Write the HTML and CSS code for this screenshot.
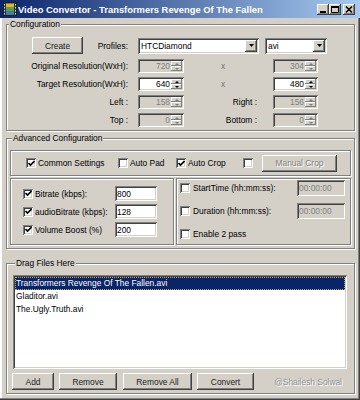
FILE: index.html
```html
<!DOCTYPE html>
<html>
<head>
<meta charset="utf-8">
<title>Video Convertor</title>
<link rel="stylesheet" href="styles.css">
</head>
<body>
<div class="window">
  <div class="titlebar">
    <svg class="appicon" width="14" height="14" viewBox="0 0 14 14">
      <rect x="0.5" y="0.5" width="13" height="13" fill="#2a3a2a" stroke="#202020"/>
      <rect x="3" y="1.5" width="8" height="11" fill="#e8b030"/>
      <rect x="3" y="5" width="8" height="4" fill="#5aa040"/>
      <rect x="3" y="9" width="8" height="3.5" fill="#3a78c8"/>
      <g fill="#d8d8d8">
        <rect x="1" y="2" width="1" height="1.5"/><rect x="1" y="5" width="1" height="1.5"/><rect x="1" y="8" width="1" height="1.5"/><rect x="1" y="11" width="1" height="1.5"/>
        <rect x="12" y="2" width="1" height="1.5"/><rect x="12" y="5" width="1" height="1.5"/><rect x="12" y="8" width="1" height="1.5"/><rect x="12" y="11" width="1" height="1.5"/>
      </g>
    </svg>
    <span class="title">Video Convertor - Transformers Revenge Of The Fallen</span>
    <div class="ctrls">
      <span class="cbtn"><svg width="12" height="11" viewBox="0 0 12 11"><rect x="3" y="7" width="6" height="2" fill="#000"/></svg></span>
      <span class="cbtn"><svg width="12" height="11" viewBox="0 0 12 11"><path d="M2.5 2.5h7v6h-7z" fill="none" stroke="#000"/><rect x="2" y="2" width="8" height="2" fill="#000"/></svg></span>
      <span class="cbtn close"><svg width="12" height="11" viewBox="0 0 12 11"><path d="M3 2.5l6 6M9 2.5l-6 6" stroke="#000" stroke-width="1.5"/></svg></span>
    </div>
  </div>

  <div class="content">
    <fieldset class="group config">
      <legend>Configuration</legend>
      <div class="row1">
        <span class="btn create">Create</span>
        <span class="lbl profiles">Profiles:</span>
        <span class="select profile"><span class="val">HTCDiamond</span><span class="drop"><svg width="5" height="3" viewBox="0 0 5 3"><path d="M0 0h5L2.5 3z"/></svg></span></span>
        <span class="select fmt"><span class="val">avi</span><span class="drop"><svg width="5" height="3" viewBox="0 0 5 3"><path d="M0 0h5L2.5 3z"/></svg></span></span>
      </div>
      <div class="resgrid">
        <span class="lbl r">Original Resolution(WxH):</span>
        <span class="spin dis"><span class="val">720</span><span class="arrows"><i class="up"></i><i class="dn"></i></span></span>
        <span class="lbl x">x</span>
        <span class="spin dis"><span class="val">304</span><span class="arrows"><i class="up"></i><i class="dn"></i></span></span>

        <span class="lbl r">Target Resolution(WxH):</span>
        <span class="spin"><span class="val">640</span><span class="arrows"><i class="up"></i><i class="dn"></i></span></span>
        <span class="lbl x">x</span>
        <span class="spin"><span class="val">480</span><span class="arrows"><i class="up"></i><i class="dn"></i></span></span>

        <span class="lbl r">Left :</span>
        <span class="spin dis"><span class="val">158</span><span class="arrows"><i class="up"></i><i class="dn"></i></span></span>
        <span class="lbl m">Right :</span>
        <span class="spin dis"><span class="val">156</span><span class="arrows"><i class="up"></i><i class="dn"></i></span></span>

        <span class="lbl r">Top :</span>
        <span class="spin dis"><span class="val">0</span><span class="arrows"><i class="up"></i><i class="dn"></i></span></span>
        <span class="lbl m">Bottom :</span>
        <span class="spin dis"><span class="val">0</span><span class="arrows"><i class="up"></i><i class="dn"></i></span></span>
      </div>
    </fieldset>

    <fieldset class="group advanced">
      <legend>Advanced Configuration</legend>
      <div class="panel toprow">
        <span class="chk w-common"><span class="cb on"><svg width="7" height="7" viewBox="0 0 7 7"><path d="M0.5 3l2 2 4-4" fill="none" stroke="#000" stroke-width="1.6"/></svg></span>Common Settings</span>
        <span class="chk w-pad"><span class="cb"></span>Auto Pad</span>
        <span class="chk w-crop"><span class="cb on"><svg width="7" height="7" viewBox="0 0 7 7"><path d="M0.5 3l2 2 4-4" fill="none" stroke="#000" stroke-width="1.6"/></svg></span>Auto Crop</span>
        <span class="chk w-empty"><span class="cb"></span></span>
        <span class="btn dis manual">Manual Crop</span>
      </div>
      <div class="panels">
        <div class="panel leftp">
          <span class="chk"><span class="cb on"><svg width="7" height="7" viewBox="0 0 7 7"><path d="M0.5 3l2 2 4-4" fill="none" stroke="#000" stroke-width="1.6"/></svg></span>Bitrate (kbps):</span>
          <span class="field">800</span>
          <span class="chk"><span class="cb on"><svg width="7" height="7" viewBox="0 0 7 7"><path d="M0.5 3l2 2 4-4" fill="none" stroke="#000" stroke-width="1.6"/></svg></span>audioBitrate (kbps):</span>
          <span class="field">128</span>
          <span class="chk"><span class="cb on"><svg width="7" height="7" viewBox="0 0 7 7"><path d="M0.5 3l2 2 4-4" fill="none" stroke="#000" stroke-width="1.6"/></svg></span>Volume Boost (%)</span>
          <span class="field">200</span>
        </div>
        <div class="panel rightp">
          <span class="chk"><span class="cb"></span>StartTime (hh:mm:ss):</span>
          <span class="field dis">00:00:00</span>
          <span class="chk"><span class="cb"></span>Duration (hh:mm:ss):</span>
          <span class="field dis">00:00:00</span>
          <span class="chk span2"><span class="cb"></span>Enable 2 pass</span>
        </div>
      </div>
    </fieldset>

    <fieldset class="group drag">
      <legend>Drag Files Here</legend>
      <div class="list">
        <div class="item sel">Transformers Revenge Of The Fallen.avi</div>
        <div class="item">Gladitor.avi</div>
        <div class="item">The.Ugly.Truth.avi</div>
      </div>
      <div class="actions">
        <span class="btn add">Add</span>
        <span class="btn remove">Remove</span>
        <span class="btn removeall">Remove All</span>
        <span class="btn convert">Convert</span>
        <span class="credit">@Shailesh Solwal</span>
      </div>
    </fieldset>
  </div>
</div>
</body>
</html>
```

FILE: styles.css
```css
* { box-sizing: border-box; }

body {
  margin: 0;
  background: #D4D0C8;
  font-family: "Liberation Sans", Arial, sans-serif;
  font-size: 8.4px;
  color: #000;
}

.window {
  width: 360px;
  height: 400px;
  background: #D4D0C8;
  display: flex;
  flex-direction: column;
  overflow: hidden;
  box-shadow: inset -1px -1px 0 #404040, inset -2px -2px 0 #808080, inset 2px 0 0 #fff;
}

/* Title bar */
.titlebar {
  flex: none;
  height: 18px;
  display: flex;
  align-items: center;
  padding: 0 5px 0 3px;
  background: linear-gradient(to right, #0A246A, #A6CAF0);
}
.appicon { flex: none; }
.title {
  flex: 1;
  margin-left: 1px;
  color: #fff;
  font-weight: bold;
  font-size: 9.4px;
  white-space: nowrap;
  overflow: hidden;
}
.ctrls { display: flex; }
.cbtn {
  width: 12px;
  height: 11px;
  background: #D4D0C8;
  box-shadow: inset -1px -1px 0 #404040, inset 1px 1px 0 #fff, inset -2px -2px 0 #808080;
  display: flex;
}
.cbtn.close { margin-left: 2px; }

/* Content */
.content {
  flex: 1;
  padding: 1px 5px 0 6px;
  display: flex;
  flex-direction: column;
}

.group {
  margin: 0;
  padding: 0;
  min-width: 0;
  border: 1px solid #808080;
  box-shadow: inset 1px 1px 0 #fff, 1px 1px 0 #fff;
}
.group > legend {
  margin-left: 2px;
  padding: 0 1px;
  height: 10px;
  line-height: 10px;
  background: #D4D0C8;
}

/* Config */
.config { padding: 8px 0 3px 0; }
.row1 {
  display: flex;
  align-items: center;
  height: 17px;
  padding-left: 25px;
}
.create { width: 51px; height: 17px; }
.profiles { width: 55px; text-align: right; padding-right: 10px; }
.select {
  display: flex;
  align-items: center;
  height: 16px;
  background: #fff;
  padding: 2px;
  box-shadow: inset 1px 1px 0 #808080, inset -1px -1px 0 #fff, inset 2px 2px 0 #404040, inset -2px -2px 0 #D4D0C8;
}
.select .val { flex: 1; padding-left: 1px; line-height: 12px; }
.select.profile { width: 121px; }
.select.fmt { width: 62px; margin-left: 6px; }
.drop {
  width: 12px;
  height: 12px;
  background: #D4D0C8;
  box-shadow: inset -1px -1px 0 #404040, inset 1px 1px 0 #fff, inset -2px -2px 0 #808080;
  display: flex;
  align-items: center;
  justify-content: center;
  padding-bottom: 1px;
}

.resgrid {
  display: grid;
  grid-template-columns: 118px 46px 89px 45px;
  grid-auto-rows: 14px;
  row-gap: 4px;
  margin-top: 5px;
  margin-left: 13px;
  align-items: center;
}
.lbl { white-space: nowrap; }
.lbl.r { text-align: right; padding-right: 10px; }
.lbl.m { text-align: right; padding-right: 16px; }
.lbl.x { color: #707070; padding-left: 37px; }

.spin {
  display: flex;
  height: 14px;
  padding: 2px;
  background: #fff;
  box-shadow: inset 1px 1px 0 #808080, inset -1px -1px 0 #fff, inset 2px 2px 0 #404040, inset -2px -2px 0 #D4D0C8;
}
.spin.dis { background: #D4D0C8; color: #808080; }
.spin .val { flex: 1; text-align: right; padding-right: 1px; line-height: 10px; }
.arrows {
  width: 11px;
  display: flex;
  flex-direction: column;
}
.arrows i {
  flex: 1;
  background: #D4D0C8;
  box-shadow: inset -1px -1px 0 #808080, inset 1px 1px 0 #fff;
  display: flex;
  align-items: center;
  justify-content: center;
}
.arrows i::after {
  content: "";
  border-left: 2px solid transparent;
  border-right: 2px solid transparent;
}
.arrows .up::after { border-bottom: 2px solid #000; }
.arrows .dn::after { border-top: 2px solid #000; }
.spin.dis .arrows .up::after { border-bottom-color: #808080; }
.spin.dis .arrows .dn::after { border-top-color: #808080; }

/* Buttons */
.btn {
  display: inline-flex;
  align-items: center;
  justify-content: center;
  height: 17px;
  background: #D4D0C8;
  color: #202020;
  box-shadow: inset -1px -1px 0 #404040, inset 1px 1px 0 #fff, inset -2px -2px 0 #808080;
  white-space: nowrap;
}
.btn.dis { color: #808080; text-shadow: 1px 1px 0 #fff; }

/* Advanced */
.advanced { margin-top: 2px; padding: 7px 3px 3px 3px; }
.panel {
  border: 1px solid #808080;
  box-shadow: inset 1px 1px 0 #fff, 1px 1px 0 #fff;
}
.toprow {
  height: 26px;
  display: flex;
  align-items: center;
  padding-left: 15px;
}
.chk {
  display: flex;
  align-items: center;
  gap: 2px;
  white-space: nowrap;
}
.cb {
  flex: none;
  width: 10px;
  height: 10px;
  background: #fff;
  box-shadow: inset 1px 1px 0 #808080, inset -1px -1px 0 #fff, inset 2px 2px 0 #404040, inset -2px -2px 0 #D4D0C8;
  display: flex;
  align-items: center;
  justify-content: center;
}
.cb svg { margin-left: 1px; }
.w-common { width: 92px; }
.w-pad { width: 58px; }
.w-crop { width: 67px; }
.w-empty { width: 19px; }
.manual { width: 75px; height: 17px; }

.panels {
  display: flex;
  gap: 2px;
  margin-top: 2px;
}
.leftp {
  width: 164px;
  height: 67px;
  display: grid;
  grid-template-columns: 92px 42px;
  grid-auto-rows: 15px;
  row-gap: 3px;
  align-items: center;
  padding: 7px 0 0 12px;
}
.rightp {
  flex: 1;
  height: 67px;
  display: grid;
  grid-template-columns: 117px 48px;
  grid-auto-rows: 16px;
  row-gap: 7px;
  align-items: center;
  padding: 1px 0 0 3px;
}
.rightp .chk { gap: 3px; }
.span2 { grid-column: 1 / 3; }

.field {
  height: 100%;
  background: #fff;
  padding-left: 2px;
  display: flex;
  align-items: center;
  box-shadow: inset 1px 1px 0 #808080, inset -1px -1px 0 #fff, inset 2px 2px 0 #404040, inset -2px -2px 0 #D4D0C8;
}
.field.dis { background: #D4D0C8; color: #808080; }

/* Drag */
.drag { margin-top: 9px; padding: 7px 7px 3px 6px; }
.list {
  height: 94px;
  background: #fff;
  padding: 2px;
  box-shadow: inset 1px 1px 0 #808080, inset -1px -1px 0 #fff, inset 2px 2px 0 #404040, inset -2px -2px 0 #D4D0C8;
}
.item {
  height: 13px;
  line-height: 13px;
  padding-left: 1px;
  white-space: nowrap;
}
.item.sel {
  background: #0A246A;
  color: #fff;
  outline: 1px dotted #c8a860;
  outline-offset: -1px;
}
.actions {
  display: flex;
  align-items: center;
  margin-top: 4px;
  margin-left: -1px;
}
.add { width: 42px; }
.remove { width: 58px; margin-left: 5px; }
.removeall { width: 69px; margin-left: 6px; }
.convert { width: 57px; margin-left: 5px; }
.credit {
  margin-left: auto;
  margin-right: 5px;
  color: #909090;
  text-shadow: 1px 1px 0 #fff;
  white-space: nowrap;
}
```
